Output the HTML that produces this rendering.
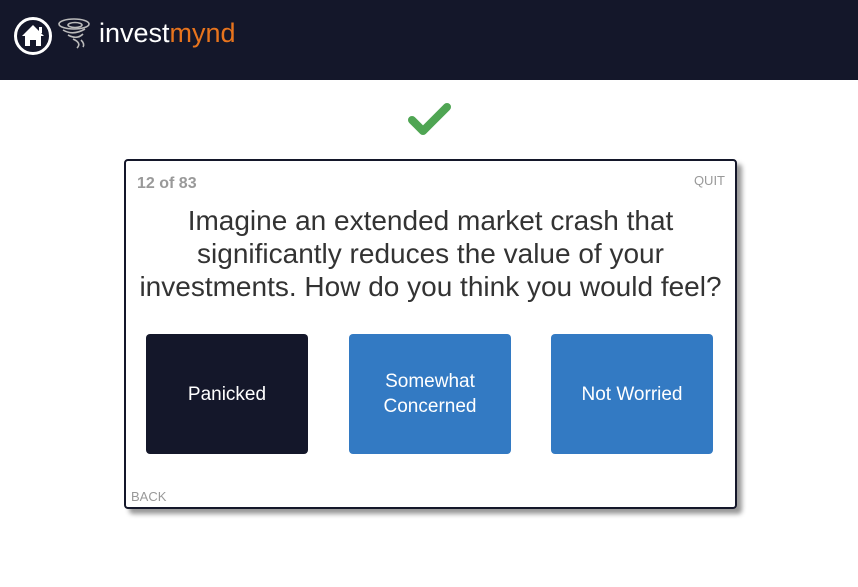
<!DOCTYPE html>
<html><head><style>
body{margin:0;width:858px;height:587px;background:#fff;font-family:"Liberation Sans",Arial,sans-serif;position:relative;overflow:hidden}
.hdr{position:absolute;left:0;top:0;width:858px;height:80px;background:#14172a}
.card{position:absolute;left:124px;top:159px;width:609px;height:346px;border:2px solid #14172a;border-radius:4px;box-shadow:5px 5px 5px #999;background:#fff}
.btn{position:absolute;top:173px;width:162px;height:120px;border-radius:4px;color:#fff;font-size:19px;display:flex;align-items:center;justify-content:center;text-align:center;line-height:25px}
</style></head><body>
<div class="hdr">
<svg style="position:absolute;left:13px;top:16px" width="40" height="40" viewBox="0 0 40 40"><circle cx="20" cy="20" r="17.5" fill="none" stroke="#fff" stroke-width="3"/><path d="M20 9 L31 20 L28 20 L28 30 L23 30 L23 24 L17 24 L17 30 L12 30 L12 20 L9 20 Z" fill="#fff"/><rect x="26" y="11" width="3" height="6" fill="#fff"/></svg>
<svg style="position:absolute;left:57px;top:17px" width="38" height="32" viewBox="0 0 38 32" fill="none" stroke="#bbb" stroke-width="1.6"><ellipse cx="17" cy="7" rx="15" ry="5"/><ellipse cx="18" cy="8" rx="7" ry="2.5"/><path d="M6 13 Q16 19 28 12 M11 18 Q20 23 26 17 M16 22 Q25 26 20 31 M24 23 Q28 27 26 30"/></svg>
<div style="position:absolute;left:99px;top:18px;font-size:27px;color:#fff">invest<span style="color:#e8741d">mynd</span></div>
</div>
<svg style="position:absolute;left:408px;top:103px" width="43" height="34" viewBox="0 0 43 34"><path d="M4 17 L15 28 L39 4" fill="none" stroke="#4fa553" stroke-width="8" stroke-linecap="round" stroke-linejoin="round"/></svg>
<div class="card">
<div style="position:absolute;left:11px;top:14px;font-size:16px;font-weight:bold;color:#999">12 of 83</div>
<div style="position:absolute;right:10px;top:12px;font-size:13px;color:#999">QUIT</div>
<div style="position:absolute;left:0;top:43px;width:609px;text-align:center;font-size:28px;line-height:33px;color:#333">Imagine an extended market crash that<br>significantly reduces the value of your<br>investments. How do you think you would feel?</div>
<div class="btn" style="left:20px;background:#14172a">Panicked</div>
<div class="btn" style="left:223px;background:#337ac3">Somewhat<br>Concerned</div>
<div class="btn" style="left:425px;background:#337ac3">Not Worried</div>
<div style="position:absolute;left:5px;top:328px;font-size:13px;color:#999">BACK</div>
</div>
</body></html>
